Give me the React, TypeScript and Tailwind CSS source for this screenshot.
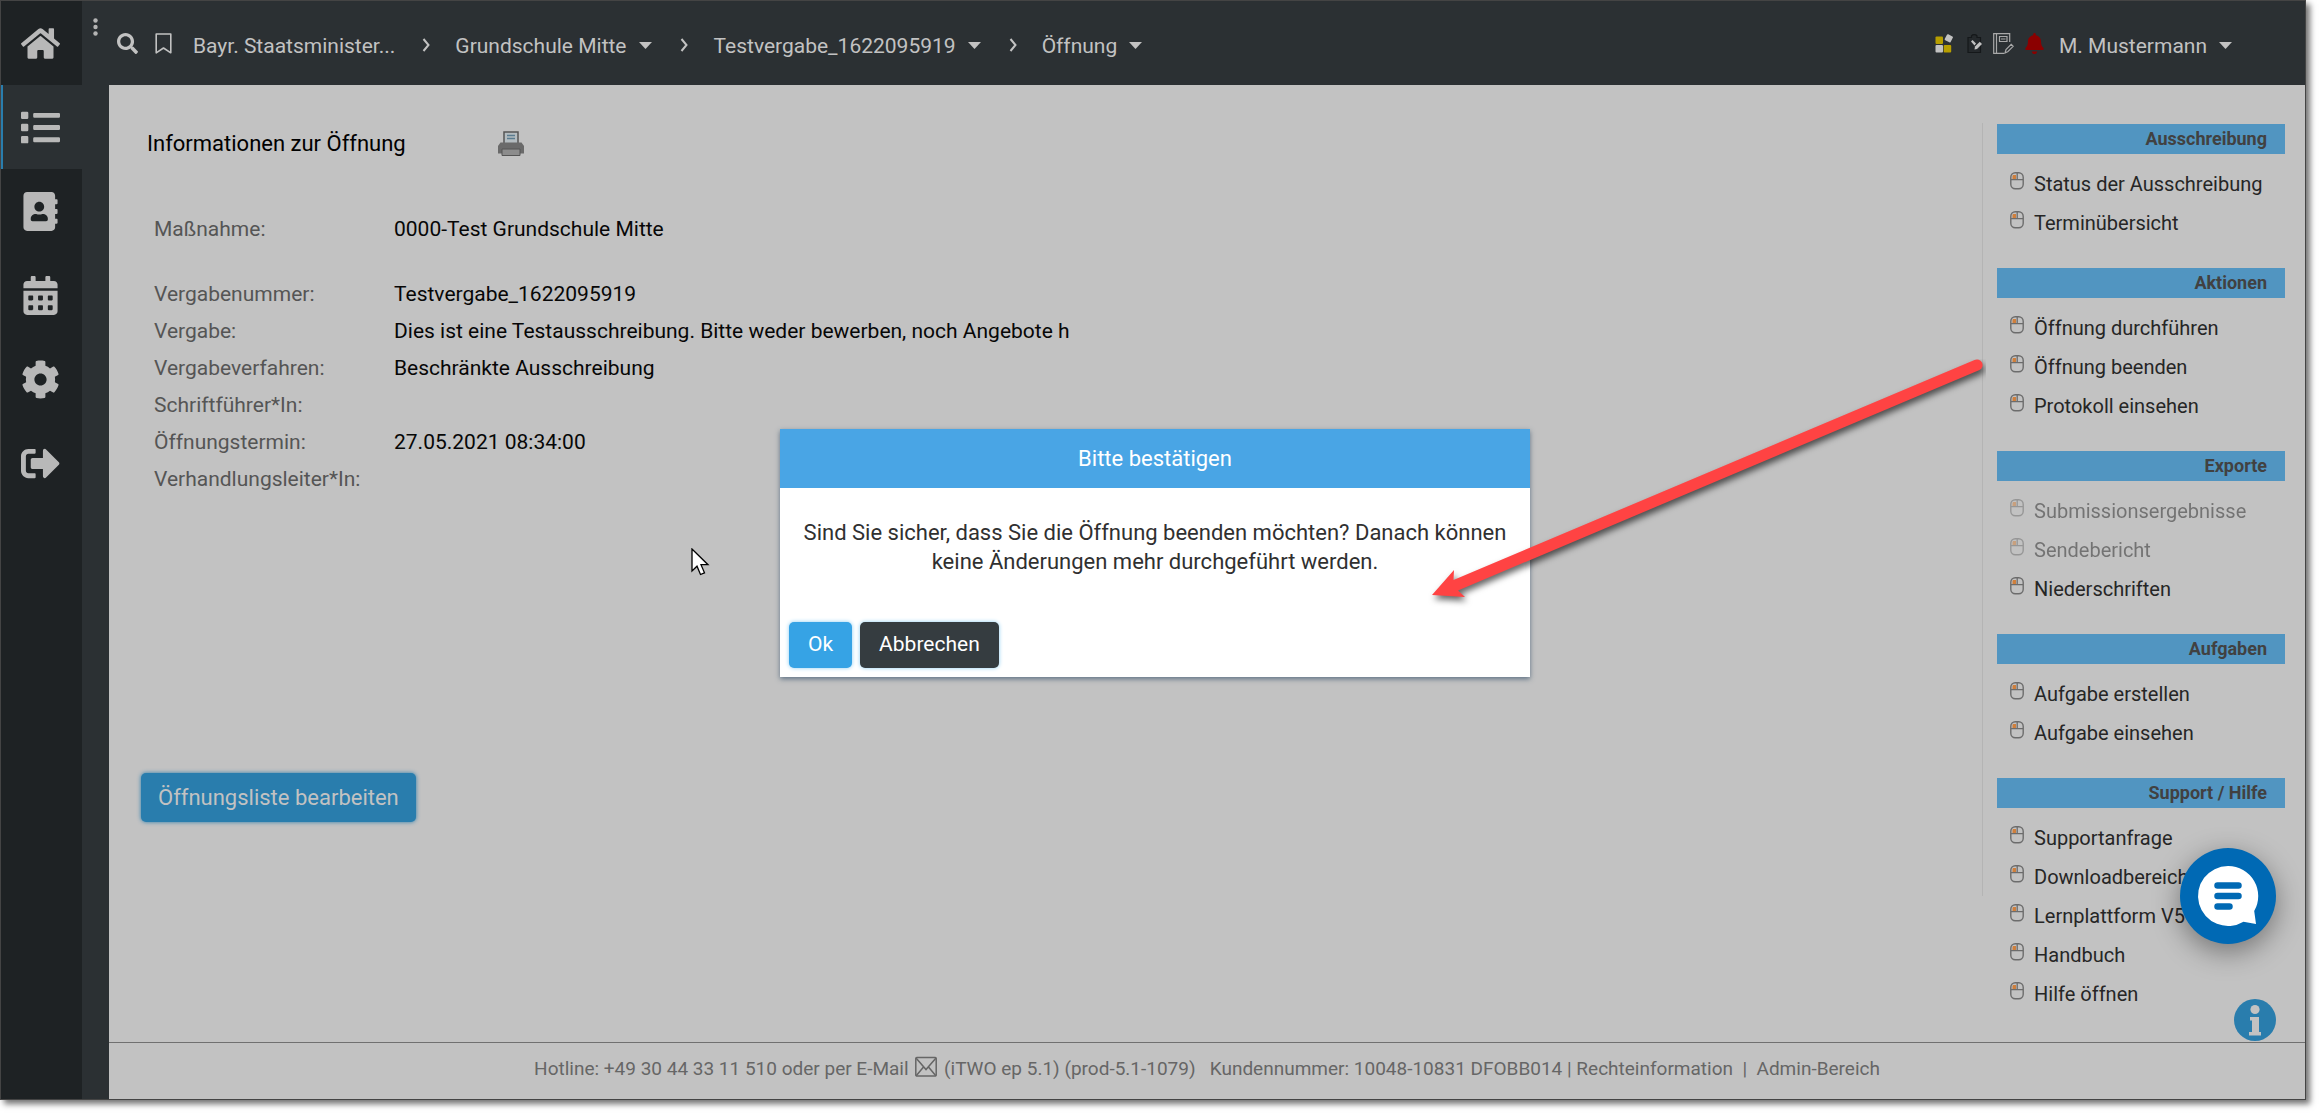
import { ReactNode } from "react";
import {
  FaAddressBook,
  FaBell,
  FaCalendarAlt,
  FaCog,
  FaHome,
  FaList,
  FaSearch,
  FaSignOutAlt,
} from "react-icons/fa";

const navItems = [
  { label: "Startseite", icon: FaHome },
  { label: "Vergaben", icon: FaList, active: true },
  { label: "Adressbuch", icon: FaAddressBook },
  { label: "Kalender", icon: FaCalendarAlt },
  { label: "Einstellungen", icon: FaCog },
  { label: "Abmelden", icon: FaSignOutAlt },
];

const details = [
  ["Vergabenummer:", "Testvergabe_1622095919"],
  ["Vergabe:", "Dies ist eine Testausschreibung. Bitte weder bewerben, noch Angebote h"],
  ["Vergabeverfahren:", "Beschränkte Ausschreibung"],
  ["Schriftführer*In:", ""],
  ["Öffnungstermin:", "27.05.2021 08:34:00"],
  ["Verhandlungsleiter*In:", ""],
];

const sections: { title: string; items: string[]; disabled?: string[] }[] = [
  { title: "Ausschreibung", items: ["Status der Ausschreibung", "Terminübersicht"] },
  { title: "Aktionen", items: ["Öffnung durchführen", "Öffnung beenden", "Protokoll einsehen"] },
  {
    title: "Exporte",
    items: ["Submissionsergebnisse", "Sendebericht", "Niederschriften"],
    disabled: ["Submissionsergebnisse", "Sendebericht"],
  },
  { title: "Aufgaben", items: ["Aufgabe erstellen", "Aufgabe einsehen"] },
  {
    title: "Support / Hilfe",
    items: ["Supportanfrage", "Downloadbereich", "Lernplattform V5", "Handbuch", "Hilfe öffnen"],
  },
];

function Caret() {
  return (
    <svg className="h-[7px] w-[13px] shrink-0" viewBox="0 0 13 7" fill="currentColor" aria-hidden="true">
      <path d="M0 0h13L6.500 7z" />
    </svg>
  );
}

function Chevron() {
  return (
    <svg className="h-[14px] w-[9px] shrink-0" viewBox="0 0 9 14" fill="none" stroke="currentColor" strokeWidth="2" aria-hidden="true">
      <path d="M1.500 1l5 6-5 6" />
    </svg>
  );
}

function MouseIcon() {
  return (
    <svg className="h-[18px] w-[14px] shrink-0" viewBox="0 0 14 18" fill="none" aria-hidden="true">
      <path d="M3 3h3v4H2.500V4z" fill="#cf7f3c" />
      <rect x="0.800" y="0.800" width="12.400" height="16" rx="4.500" stroke="#6c6c6c" strokeWidth="1.400" />
      <path d="M1 7.700h12M7.200 1v6.500" stroke="#6c6c6c" strokeWidth="1.300" />
    </svg>
  );
}

function Crumb({ children, className = "" }: { children: ReactNode; className?: string }) {
  return (
    <button type="button" className={`flex items-center gap-3 ${className}`}>
      {children}
      <span className="mb-[2px]"><Caret /></span>
    </button>
  );
}

function Header() {
  return (
    <header className="flex h-[84px] items-start justify-between bg-[#2b3033] text-[21px] leading-[30px] text-[#c2c2c2]">
      <div className="flex items-start">
        <button type="button" aria-label="Menü" className="mt-[17px] ml-[11px] w-[5px]">
          <svg viewBox="0 0 5 18" className="h-[18px] w-[5px]" fill="#b4b4b4" aria-hidden="true">
            <circle cx="2.500" cy="2.500" r="2.200" />
            <circle cx="2.500" cy="9" r="2.200" />
            <circle cx="2.500" cy="15.500" r="2.200" />
          </svg>
        </button>
        <nav className="mt-[30px] ml-[19px] flex items-center" aria-label="Brotkrumen">
          <button type="button" aria-label="Suche" className="mb-[5px]">
            <FaSearch className="size-[21px]" />
          </button>
          <button type="button" aria-label="Lesezeichen" className="mb-[5px] ml-[17px]">
            <svg viewBox="0 0 17 21" className="h-[21px] w-[17px]" fill="none" stroke="currentColor" strokeWidth="1.600" aria-hidden="true">
              <path d="M1.200 1h14.600v18.800L8.500 15 1.200 19.800z" strokeLinejoin="round" />
            </svg>
          </button>
          <a href="#ministerium" className="ml-[21px]">Bayr. Staatsminister...</a>
          <span className="mb-[3px] ml-[27px] flex"><Chevron /></span>
          <Crumb className="ml-6">Grundschule Mitte</Crumb>
          <span className="mb-[3px] ml-[28px] flex"><Chevron /></span>
          <Crumb className="ml-[25px]">Testvergabe_1622095919</Crumb>
          <span className="mb-[3px] ml-[28px] flex"><Chevron /></span>
          <Crumb className="ml-6">Öffnung</Crumb>
        </nav>
      </div>
      <div className="mt-[30px] mr-[73px] flex items-center">
        <button type="button" aria-label="Kacheln" className="mb-[5px]">
          <svg viewBox="0 0 18 19" className="h-[19px] w-[18px]" aria-hidden="true">
            <rect x="0.500" y="2.500" width="7.500" height="7.500" rx="1" fill="#b79e00" />
            <rect x="0.500" y="11" width="7.500" height="7.500" rx="1" fill="#c2c2c2" />
            <rect x="8.700" y="11" width="7.500" height="7.500" rx="1" fill="#b79e00" />
            <rect x="10.500" y="1" width="6.600" height="6.600" rx="1" fill="#c2c2c2" transform="rotate(28 13.800 4.300)" />
          </svg>
        </button>
        <button type="button" aria-label="Aufgaben" className="mb-[5px] ml-[14px]">
          <svg viewBox="0 0 16 20" className="h-[20px] w-[16px]" aria-hidden="true">
            <path d="M1 3.500h3.500V1.800C5.500.3 9 .3 10 1.800v1.700h3.500V18.500H1z" fill="#25292c" stroke="#15181a" strokeWidth="1.200" />
            <path d="M4 7.500l1.500-1.500 3.500 3.500-1.500 2z" fill="#c2c2c2" />
            <path d="M7.500 15.500l.5-3 4.800-4.800 2.200 2.200-5 5z" fill="#c2c2c2" />
          </svg>
        </button>
        <button type="button" aria-label="Notizen" className="mb-[5px] ml-[10px]">
          <svg viewBox="0 0 21 21" className="size-[21px]" fill="none" stroke="#a8a8a8" strokeWidth="1.200" aria-hidden="true">
            <path d="M11 20.300H.7V.7h16V9M3.500.7v19.600M6.500 3.500h7.500v5H6.500zM8 6h4.500M12 20l1-3.500 5.200-5.200 2 2-5.200 5.200z" />
          </svg>
        </button>
        <button type="button" aria-label="Benachrichtigungen" className="mb-[5px] ml-[10px]">
          <FaBell className="size-[21px] text-[#8b0000]" />
        </button>
        <Crumb className="ml-[14px]">M. Mustermann</Crumb>
      </div>
    </header>
  );
}

function Aside() {
  return (
    <aside className="mr-5 ml-[14px] w-[288px] shrink-0 pt-[39px]">
      {sections.map((s) => (
        <section key={s.title} className="mb-[26px]">
          <h2 className="bg-[#5195c1] pr-[18px] text-right text-[18px] leading-[30px] font-bold text-[#414141]">{s.title}</h2>
          <ul className="pt-[10px]">
            {s.items.map((item) => {
              const off = s.disabled?.includes(item);
              return (
                <li key={item} className={off ? "opacity-50" : ""}>
                  <a href="#aktion" aria-disabled={off} className="flex h-[39px] items-center pl-[13px] text-[20px] leading-[30px] text-[#262626]">
                    <span className="mr-[10px] mb-[6px]"><MouseIcon /></span>
                    {item}
                  </a>
                </li>
              );
            })}
          </ul>
        </section>
      ))}
    </aside>
  );
}

function Details() {
  return (
    <main className="mt-[38px] flex-1 self-start border-r border-[#b4b4b4] pb-[74px]">
      <div className="flex items-center pt-[6px] pl-[38px]">
        <h1 className="w-[350px] text-[22px] leading-[30px] text-black">Informationen zur Öffnung</h1>
        <button type="button" aria-label="Drucken">
          <svg viewBox="0 0 28 26" className="h-[26px] w-[28px]" aria-hidden="true">
            <path d="M7 12V1h14v11" fill="#b4bcc0" stroke="#555" strokeWidth="1.500" />
            <path d="M10 4.500h8M10 7.500h8" stroke="#5a7c90" strokeWidth="1.500" />
            <path d="M3.500 11.500h21L27 15v7.500H1V15z" fill="#6a6a6a" />
            <path d="M5 18h18v6.500H5z" fill="#8c8c8c" stroke="#555" />
          </svg>
        </button>
      </div>
      <dl className="mt-[52px] pl-[45px] text-[21px] leading-[37px] text-[#070707]">
        <div className="mb-7 flex">
          <dt className="w-[240px] text-[#555]">Maßnahme:</dt>
          <dd>0000-Test Grundschule Mitte</dd>
        </div>
        {details.map(([label, value]) => (
          <div key={label} className="flex">
            <dt className="w-[240px] text-[#555]">{label}</dt>
            <dd>{value}</dd>
          </div>
        ))}
      </dl>
      <button
        type="button"
        className="mt-[275px] ml-8 block h-[49px] rounded-[5px] bg-[#297dad] px-[17px] text-[22px] text-[#c2c2c2] shadow-[0_0_4px_#297dad]"
      >
        Öffnungsliste bearbeiten
      </button>
    </main>
  );
}

function Footer() {
  return (
    <footer className="flex h-[57px] items-center justify-center border-t border-[#707070] pb-[3px] text-[19px] text-[#666]">
      <p className="flex items-center whitespace-pre">
        Hotline: +49 30 44 33 11 510 oder per E-Mail{" "}
        <a href="#mail" aria-label="E-Mail" className="mx-[2px] mb-[5px]">
          <svg viewBox="0 0 22 22" className="size-[22px]" fill="none" stroke="currentColor" strokeWidth="1.500" aria-hidden="true">
            <rect x="0.800" y="1.500" width="20.400" height="18.500" rx="1" />
            <path d="M1 2l10 11.500L21 2M1 20l7.500-9M21 20l-7.500-9" />
          </svg>
        </a>
        {" (iTWO ep 5.1) (prod-5.1-1079)   Kundennummer: 10048-10831 DFOBB014 | "}
        <a href="#rechte">Rechteinformation</a>
        {"  |  "}
        <a href="#admin">Admin-Bereich</a>
      </p>
    </footer>
  );
}

function ConfirmDialog() {
  return (
    <div className="absolute inset-0 flex items-center justify-center pt-[5px] pl-1">
      <div role="dialog" aria-labelledby="dlg-title" className="w-[750px] bg-white shadow-[0_2px_5px_#5f7285]">
        <h2 id="dlg-title" className="bg-[#49a5e5] text-center text-[22px] leading-[59px] text-white">Bitte bestätigen</h2>
        <p className="px-4 pt-[30px] text-center text-[22px] leading-[29px] text-[#303030]">
          Sind Sie sicher, dass Sie die Öffnung beenden möchten? Danach können keine Änderungen mehr durchgeführt werden.
        </p>
        <div className="mt-[46px] flex gap-2 px-[9px] pb-[9px] text-[21px] text-white">
          <button type="button" className="h-[46px] rounded-[5px] bg-[#36a3e5] px-[19px] shadow-[0_0_4px_#8ccdf2]">Ok</button>
          <button type="button" className="h-[46px] rounded-[5px] bg-[#353c40] px-[19px] shadow-[0_0_4px_#8ccdf2]">Abbrechen</button>
        </div>
      </div>
    </div>
  );
}

export default function App() {
  return (
    <div className="flex min-h-screen bg-white pr-[15px] pb-[15px] font-['Roboto',sans-serif]">
      <div className="relative flex flex-1 border border-[#444] bg-[#c2c2c2] shadow-[4px_4px_6px_rgba(0,0,0,0.55)]">
        <nav className="w-[81px] shrink-0 bg-[#1e2224]" aria-label="Hauptnavigation">
          {navItems.map(({ label, icon: Icon, active }) => (
            <a
              key={label}
              href="#nav"
              aria-label={label}
              className={`flex h-[84px] items-center justify-center pr-[2px] text-[#b8b8b8] ${active ? "bg-[#2b3033] shadow-[inset_2px_0_0_#297dad]" : ""}`}
            >
              <Icon className="size-[39px]" />
            </a>
          ))}
        </nav>
        <div className="flex flex-1 flex-col">
          <Header />
          <div className="flex flex-1">
            <div className="w-[27px] shrink-0 bg-[#2b3033]" />
            <div className="flex flex-1 flex-col">
              <div className="flex flex-1">
                <Details />
                <Aside />
              </div>
              <Footer />
            </div>
          </div>
        </div>

        <button type="button" aria-label="Info" className="absolute right-[29px] bottom-[58px]">
          <svg viewBox="0 0 42 42" className="size-[42px]" aria-hidden="true">
            <circle cx="21" cy="21" r="21" fill="#297dad" />
            <circle cx="21" cy="10.500" r="4.600" fill="#c2c2c2" />
            <path d="M16 18h9v15h2v3.500H15V33h3V21.500h-2z" fill="#c2c2c2" />
          </svg>
        </button>
        <button
          type="button"
          aria-label="Chat"
          className="absolute right-[29px] bottom-[155px] size-[96px] rounded-full bg-[#0069b4] shadow-[0_8px_28px_rgba(0,0,0,0.4)]"
        >
          <svg viewBox="0 0 96 96" className="size-[96px]" aria-hidden="true">
            <path d="M48 18a30 30 0 1 0 15.500 55.700L76 76l-1.800-13A30 30 0 0 0 48 18z" fill="#fff" />
            <path d="M37.500 37.500h21M37.500 48h21M37.500 58.500h12" stroke="#0069b4" strokeWidth="6.500" strokeLinecap="round" />
          </svg>
        </button>

        <ConfirmDialog />

        <svg className="pointer-events-none absolute top-[358px] left-[1425px] h-[250px] w-[560px]" viewBox="1426 359 560 250" aria-hidden="true">
          <path
            d="M1432 595L1454 570L1453.500 580L1974.500 360A5.500 5.500 0 0 1 1979.500 370L1458 590.500L1465 597Z"
            fill="#ff4343"
            className="drop-shadow-[2px_4px_3px_rgba(0,0,0,0.6)]"
          />
        </svg>
        <svg className="pointer-events-none absolute top-[547px] left-[690px] h-[29px] w-[19px]" viewBox="0 0 19 29" aria-hidden="true">
          <path d="M1 1v22l5-4.800 3.500 8.300 4-1.700L10 16.700h7z" fill="#fff" stroke="#000" strokeWidth="1.300" />
        </svg>
      </div>
    </div>
  );
}
